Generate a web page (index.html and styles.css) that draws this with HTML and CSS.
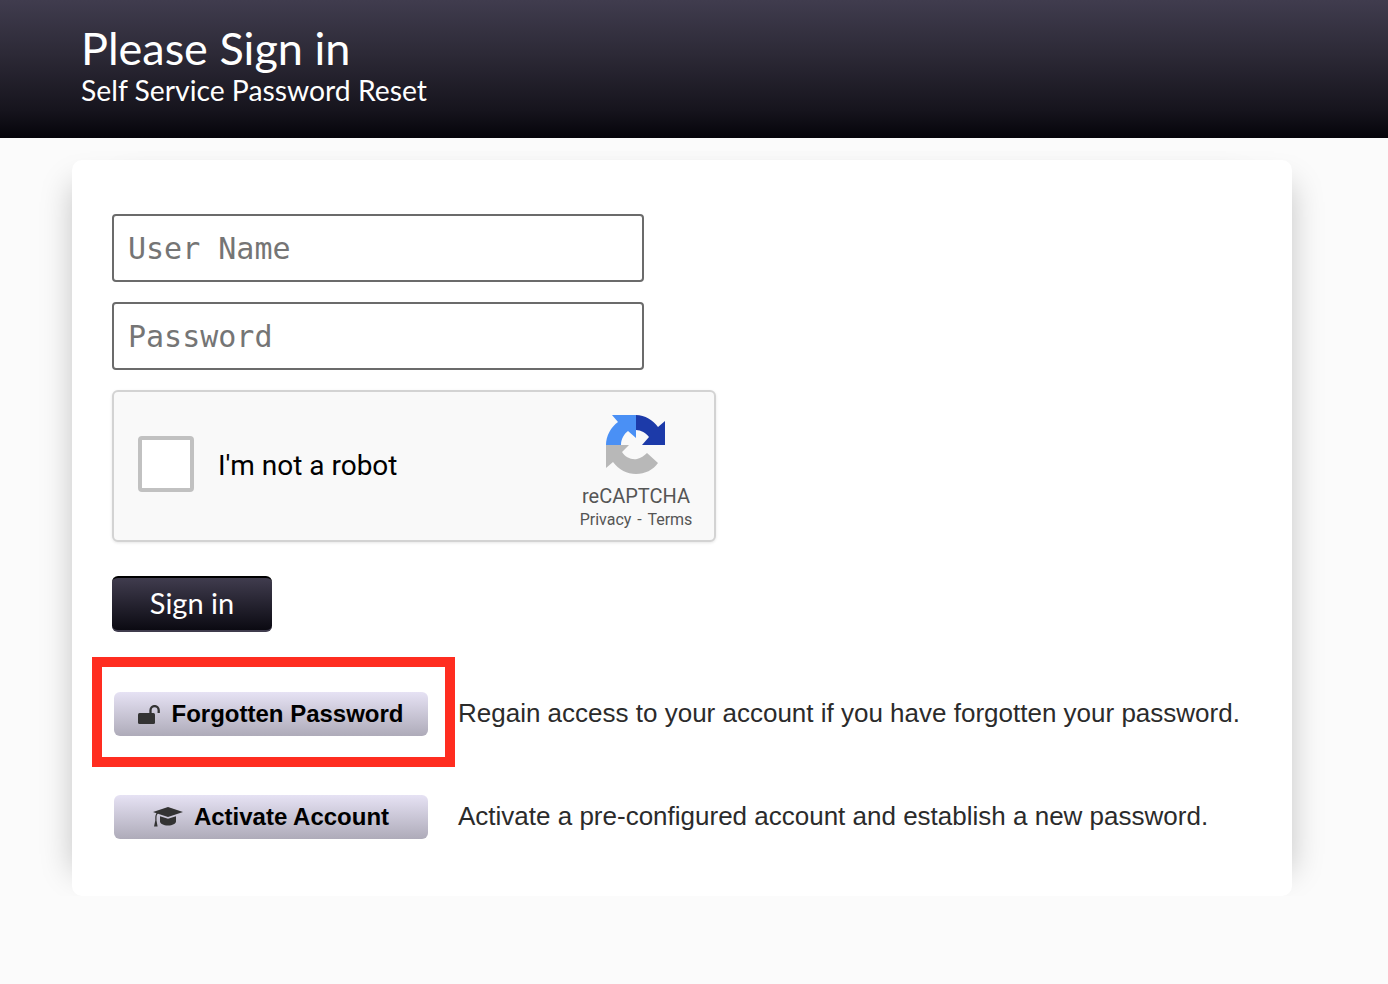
FILE: index.html
```html
<!DOCTYPE html>
<html lang="en">
<head>
  <meta charset="UTF-8">
  <title>Please Sign in</title>
  <link rel="stylesheet" href="styles.css">
</head>
<body>

  <header class="banner">
    <h1>Please Sign in</h1>
    <p>Self Service Password Reset</p>
  </header>

  <main class="card">
    <form class="login">
      <input class="field" type="text" placeholder="User Name">
      <input class="field" type="password" placeholder="Password">

      <div class="captcha">
        <div class="captcha-check"></div>
        <div class="captcha-label">I'm not a robot</div>
        <div class="captcha-brand">
          <svg class="captcha-logo" viewBox="0 0 60 60" width="60" height="60">
            <path fill="#b8b8b8" d="M0 30 H23 L16 37 C19 42 25 45 31 44 C35 43 38 41 41 38 L52 48 C47 55 39 59 30 59 C21 59 13 55 7 47 L0 53 Z"/>
            <path fill="#4a90f5" d="M0 30 C0 21 5 12 12 7 L6 0 H30 V23 L22 16 C18 19 15 24 15 30 Z"/>
            <path fill="#1c3aa9" d="M30 0 C39 0 47 5 52 12 L59 6 V30 H36 L43 22 C40 18 35 15 30 15 Z"/>
          </svg>
          <div class="captcha-name">reCAPTCHA</div>
          <div class="captcha-links">Privacy - Terms</div>
        </div>
      </div>

      <button class="signin" type="button">Sign in</button>
    </form>

    <div class="actions">
      <div class="action">
        <div class="action-btn-wrap">
          <a class="action-btn" href="#">
            <svg class="icon-unlock" viewBox="0 0 22 19" width="22" height="19">
              <rect x="0" y="8" width="17" height="11" rx="1.5" fill="#333"/>
              <path d="M12.5 9 V5.2 a4 4 0 0 1 8.2 0 V8" fill="none" stroke="#333" stroke-width="2.3"/>
            </svg>
            Forgotten Password
          </a>
          <div class="highlight"></div>
        </div>
        <p>Regain access to your account if you have forgotten your password.</p>
      </div>
      <div class="action">
        <div class="action-btn-wrap">
          <a class="action-btn" href="#">
            <svg class="icon-cap" viewBox="0 0 30 20" width="30" height="20">
              <path fill="#333" d="M0 5 L15 0 L30 5 L15 10 L5 6.8 C4 7.5 3.6 8.5 3.5 10 V13.5 L4.6 19.5 H1 L2.3 13.5 V10 C2.4 8.3 2.8 7.2 3.5 6.2 Z"/>
              <path fill="#333" d="M7 9.2 L15 11.8 L23 9.2 V14.5 C23 16.7 19.5 18.5 15 18.5 S7 16.7 7 14.5 Z"/>
            </svg>
            Activate Account
          </a>
        </div>
        <p>Activate a pre-configured account and establish a new password.</p>
      </div>
    </div>
  </main>

</body>
</html>
```

FILE: styles.css
```css
body {
  margin: 0;
  padding: 0;
  background: #fbfbfb;
  color: #2b2b2b;
  font-family: "Liberation Sans", Arial, sans-serif;
}

.banner {
  height: 138px;
  box-sizing: border-box;
  padding: 24px 0 0 81px;
  background: linear-gradient(to bottom, #403c4e 0%, #2c2936 40%, #16141d 80%, #05040a 100%);
  color: #fff;
  font-family: "Lato", "Open Sans", sans-serif;
}

.banner h1 {
  margin: 0;
  font-size: 45px;
  line-height: 48px;
  font-weight: 400;
}

.banner p {
  margin: 1px 0 0;
  font-size: 28.3px;
  line-height: 34px;
}

.card {
  width: 1140px;
  margin: 22px 0 0 72px;
  padding: 54px 40px 57px;
  background: #fff;
  border-radius: 10px;
  box-shadow: 24px 0 30px -24px rgba(0, 0, 0, 0.22), -24px 0 30px -24px rgba(0, 0, 0, 0.22);
}

.login {
  display: flex;
  flex-direction: column;
  align-items: flex-start;
  gap: 20px;
}

.field {
  width: 532px;
  height: 68px;
  box-sizing: border-box;
  padding: 0 14px;
  border: 2px solid #6b6b6b;
  border-radius: 4px;
  background: #fff;
  font-family: "DejaVu Sans Mono", monospace;
  font-size: 30px;
}

.field::placeholder {
  color: #757575;
  opacity: 1;
}

.captcha {
  width: 604px;
  height: 152px;
  box-sizing: border-box;
  display: flex;
  align-items: center;
  border: 2px solid #d3d3d3;
  border-radius: 6px;
  background: #f9f9f9;
  box-shadow: 0 1px 3px rgba(0, 0, 0, 0.1);
}

.captcha-check {
  width: 56px;
  height: 56px;
  box-sizing: border-box;
  margin: -4px 0 0 24px;
  border: 4px solid #c1c1c1;
  border-radius: 4px;
  background: #fff;
}

.captcha-label {
  margin: -2px 0 0 24px;
  font-family: "Roboto", sans-serif;
  font-size: 28px;
  color: #000;
}

.captcha-brand {
  align-self: flex-start;
  margin-left: auto;
  width: 130px;
  margin-right: 13px;
  padding-top: 23px;
  text-align: center;
  font-family: "Roboto", sans-serif;
  color: #555;
}

.captcha-logo {
  display: block;
  margin: 0 auto;
}

.captcha-name {
  margin-top: 7px;
  font-size: 20px;
  line-height: 28px;
}

.captcha-links {
  font-size: 16px;
  line-height: 20px;
  word-spacing: 2px;
}

.signin {
  width: 160px;
  height: 56px;
  margin-top: 14px;
  padding: 0 0 4px;
  border: none;
  border-top: 2px solid #000;
  border-bottom: 2px solid #403c4e;
  border-radius: 6px;
  background: linear-gradient(to bottom, #403c4e, #0b0a12);
  color: #fff;
  font-family: "Lato", "Open Sans", sans-serif;
  font-size: 29px;
}

.actions {
  display: flex;
  flex-direction: column;
  gap: 59px;
  margin-top: 60px;
  padding-left: 2px;
}

.action {
  display: flex;
  align-items: center;
  gap: 30px;
}

.action p {
  margin: -2px 0 0;
  font-size: 26px;
  white-space: nowrap;
}

.action-btn-wrap {
  position: relative;
  flex: none;
}

.action-btn {
  display: flex;
  align-items: center;
  justify-content: center;
  gap: 11px;
  width: 314px;
  height: 44px;
  border-radius: 6px;
  background: linear-gradient(to bottom, #e6e2f4, #aeabb9);
  color: #000;
  font-size: 24px;
  font-weight: 700;
  text-decoration: none;
}

.highlight {
  position: absolute;
  top: -35px;
  left: -22px;
  right: -27px;
  bottom: -31px;
  border: 10px solid #ff2d20;
}
```
